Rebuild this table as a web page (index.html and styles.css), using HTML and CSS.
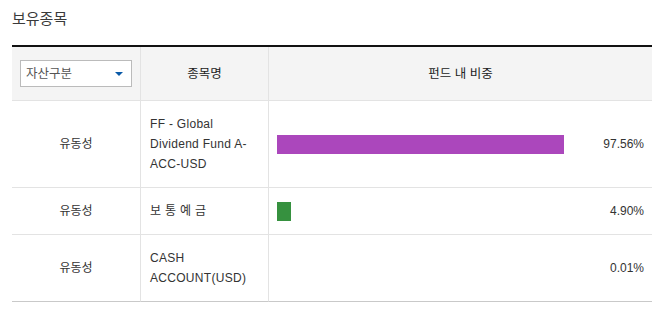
FILE: index.html
```html
<!DOCTYPE html>
<html lang="ko">
<head>
<meta charset="utf-8">
<title>보유종목</title>
<link rel="stylesheet" href="styles.css">
</head>
<body>
<div class="wrap">
  <h2 class="title">보유종목</h2>
  <div class="grid">
    <div class="cell head c1 center">
      <div class="select">
        <span>자산구분</span>
        <svg class="arrow" width="8" height="4" viewBox="0 0 8 4"><path d="M0 0H8L4 4Z" fill="#0a5aa8"/></svg>
      </div>
    </div>
    <div class="cell head c2 center">종목명</div>
    <div class="cell head c3 center">펀드 내 비중</div>

    <div class="cell row r1 c1 center">유동성</div>
    <div class="cell row r1 c2 name">FF - Global Dividend Fund A-ACC-USD</div>
    <div class="cell row r1 c3 weight">
      <div class="track"><div class="bar purple" style="width:97.56%"></div></div>
      <div class="pct">97.56%</div>
    </div>

    <div class="cell row r2 c1 center">유동성</div>
    <div class="cell row r2 c2 name">보 통 예 금</div>
    <div class="cell row r2 c3 weight">
      <div class="track"><div class="bar green" style="width:4.90%"></div></div>
      <div class="pct">4.90%</div>
    </div>

    <div class="cell row r3 c1 center last">유동성</div>
    <div class="cell row r3 c2 name last">CASH ACCOUNT(USD)</div>
    <div class="cell row r3 c3 weight last">
      <div class="track"><div class="bar purple" style="width:0.01%"></div></div>
      <div class="pct">0.01%</div>
    </div>
  </div>
</div>
</body>
</html>
```

FILE: styles.css
```css
html, body {
  margin: 0;
  padding: 0;
  background: #fff;
}
body {
  font-family: "Liberation Sans", "Noto Sans CJK KR", Arial, sans-serif;
  font-size: 12px;
  color: #333;
}
.wrap {
  padding: 8px 8px 0 12px;
  width: 640px;
}
.title {
  margin: 0;
  font-family: "Noto Sans CJK KR", sans-serif;
  font-size: 15px;
  font-weight: normal;
  line-height: 20px;
  color: #3a3a3a;
  height: 20px;
}
.grid {
  margin-top: 17px;
  border-top: 2px solid #111;
  display: grid;
  grid-template-columns: 129px 128px 1fr;
  grid-template-rows: 54px 87px 47px 67px;
}
.cell {
  display: flex;
  align-items: center;
  border-bottom: 1px solid #e3e3e3;
  line-height: 20px;
}
.c1, .c2 {
  border-right: 1px solid #e3e3e3;
}
.head {
  background: #f4f4f4;
  color: #222;
  font-size: 12.5px;
}
.center {
  justify-content: center;
}
.last {
  border-bottom-color: #c9c9c9;
}
.select {
  border: 1px solid #bbb;
  background: #fff;
  display: flex;
  align-items: center;
  justify-content: space-between;
  padding: 0 8px 0 5px;
  box-sizing: border-box;
  width: 112px;
  height: 27px;
  color: #555;
  font-size: 12.5px;
}
.arrow {
  display: block;
  margin-top: 1px;
}
.name {
  padding: 0 9px 0 9px;
  color: #333;
  letter-spacing: 0.3px;
}
.weight {
  padding: 0 8px 0 8px;
}
.track {
  flex: 0 0 294px;
  height: 19px;
}
.bar {
  height: 19px;
}
.purple {
  background: #ab47bc;
}
.green {
  background: #36913f;
}
.pct {
  flex: 1;
  text-align: right;
  color: #333;
}
```
